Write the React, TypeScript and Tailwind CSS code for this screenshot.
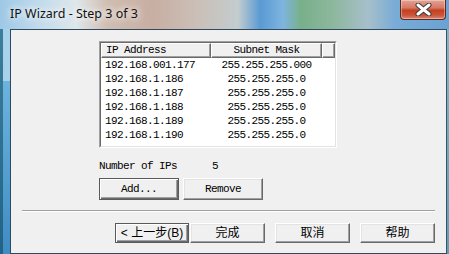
import React from "react";

const mono = "font-['Liberation_Mono','DejaVu_Sans_Mono',monospace] text-[11px] tracking-[-0.6px]";
const cjk = "font-['Liberation_Sans','Noto_Sans_CJK_SC',sans-serif] text-[12px]";

const rows = [
  ["192.168.001.177", "255.255.255.000"],
  ["192.168.1.186", "255.255.255.0"],
  ["192.168.1.187", "255.255.255.0"],
  ["192.168.1.188", "255.255.255.0"],
  ["192.168.1.189", "255.255.255.0"],
  ["192.168.1.190", "255.255.255.0"],
];

function Btn({
  label,
  width,
  framed,
  className,
}: {
  label: string;
  width: string;
  framed?: boolean;
  className?: string;
}) {
  return (
    <button
      type="button"
      className={`${width} h-full flex items-center justify-center bg-[#f0f0f0] text-black ${
        framed
          ? "border border-[#5a5a5a] shadow-[inset_1px_1px_#ffffff,inset_-1px_-1px_#696969,inset_-2px_-2px_#a0a0a0]"
          : "border border-t-white border-l-white border-r-[#696969] border-b-[#696969] shadow-[inset_-1px_-1px_#a0a0a0,inset_1px_1px_#e3e3e3]"
      } ${className ?? ""}`}
    >
      {label}
    </button>
  );
}

function HeaderCell({ label, width, center }: { label?: string; width: string; center?: boolean }) {
  return (
    <div
      className={`${width} h-full flex items-center bg-[#f0f0f0] border border-t-white border-l-white border-r-[#696969] border-b-[#696969] shadow-[inset_-1px_-1px_#a0a0a0] ${
        center ? "justify-center" : "pl-[4px]"
      }`}
    >
      {label}
    </div>
  );
}

function CloseIcon() {
  return (
    <svg width="17" height="13" viewBox="0 0 17 13">
      <path d="M3 2 L14 11 M14 2 L3 11" stroke="#3a3a3a" strokeWidth="5" strokeLinecap="round" />
      <path d="M3 2 L14 11 M14 2 L3 11" stroke="#ffffff" strokeWidth="3" strokeLinecap="round" />
    </svg>
  );
}

export default function App() {
  return (
    <div className="w-[449px] h-[254px] overflow-hidden flex flex-col bg-[linear-gradient(90deg,#9ec8e6_0%,#c2dbec_9%,#dfe7ea_17%,#d0bdb1_24%,#c8aea3_34%,#cbbfb7_44%,#c3ccce_53%,#5a9ad4_58%,#7fb4df_63%,#78b08a_67%,#8db79c_74%,#a6bfcb_82%,#79acd6_88%,#6aa2d3_100%)]">
      <div className="h-[29px] flex items-start shrink-0">
        <span className="pl-[10px] pt-[6px] text-[12.5px] leading-[16px] text-[#111] font-['Noto_Sans','Open_Sans',sans-serif] [text-shadow:0_0_6px_#ffffff,0_0_10px_#ffffff]">
          IP Wizard - Step 3 of 3
        </span>
        <div className="ml-auto mr-[3px] w-[46px] h-[20px] flex items-center justify-center rounded-b-[4px] border border-t-0 border-[#5b2a20] bg-[linear-gradient(180deg,#e2a394_0%,#d77a66_40%,#c4401f_55%,#c9553a_80%,#d98a75_100%)] shadow-[inset_0_0_0_1px_rgba(255,255,255,0.35)]">
          <CloseIcon />
        </div>
      </div>

      <div className="flex flex-1">
        <div className="w-[10px] flex">
          <div className="w-[3px] bg-[linear-gradient(180deg,#3c7f9c,#226385)]" />
          <div className="flex-1 flex flex-col">
            <div className="h-[52px] bg-[#a9d1ea]" />
            <div className="flex-1 bg-[linear-gradient(180deg,#6cb4de,#3f8cc4)]" />
          </div>
        </div>

        <div className="flex-1 border border-[#2f4a5e] border-r-[#3b5366] bg-[#f0f0f0] flex flex-col text-black">
          <div className="pl-[88px] pt-[11px]">
            <div className={`w-[238px] h-[107px] border border-t-[#a0a0a0] border-l-[#a0a0a0] border-r-white border-b-white ${mono}`}>
              <div className="w-full h-full border border-t-[#696969] border-l-[#696969] border-r-[#e3e3e3] border-b-[#e3e3e3] bg-white overflow-hidden">
                <div className="flex h-[15px] leading-[13px]">
                  <HeaderCell label="IP Address" width="w-[110px]" />
                  <HeaderCell label="Subnet Mask" width="w-[111px]" center />
                  <HeaderCell width="flex-1" />
                </div>
                {rows.map(([ip, mask]) => (
                  <div key={ip} className="flex h-[14px] leading-[14px]">
                    <div className="w-[110px] pl-[4px]">{ip}</div>
                    <div className="w-[111px] text-center">{mask}</div>
                  </div>
                ))}
              </div>
            </div>
          </div>

          <div className={`pl-[88px] mt-[11px] h-[14px] leading-[14px] flex ${mono}`}>
            <span className="w-[113px]">Number of IPs</span>
            <span>5</span>
          </div>

          <div className={`pl-[88px] mt-[5px] h-[22px] flex gap-[4px] ${mono}`}>
            <Btn label="Add..." width="w-[80px]" framed />
            <Btn label="Remove" width="w-[80px]" />
          </div>

          <div className="mx-[11px] mt-[10px] border-t border-t-[#a0a0a0] border-b border-b-white" />

          <div className={`mt-[11px] h-[20px] flex justify-end pr-[11px] ${cjk}`}>
            <Btn label="< 上一步(B)" width="w-[74px]" framed />
            <Btn label="完成" width="w-[75px]" className="ml-[1px]" />
            <Btn label="取消" width="w-[75px]" className="ml-[10px]" />
            <Btn label="帮助" width="w-[75px]" className="ml-[10px]" />
          </div>
        </div>

        <div className="w-[2px] bg-[linear-gradient(180deg,#7fb7c9,#5f9fb5)]" />
      </div>
    </div>
  );
}
